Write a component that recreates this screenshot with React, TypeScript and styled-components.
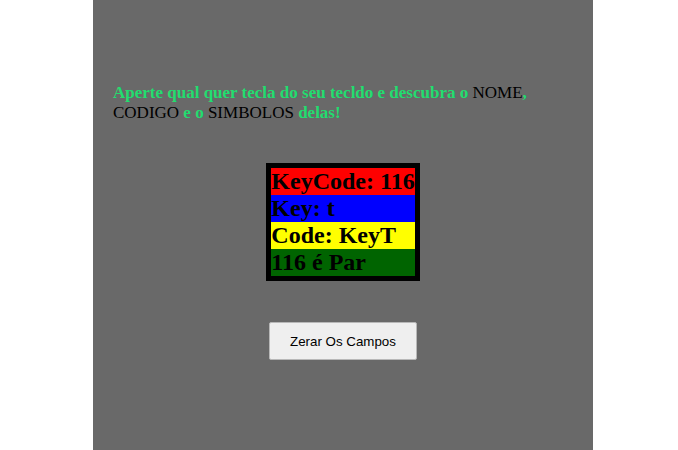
import React from "react";
import styled, { createGlobalStyle } from "styled-components";

const Global = createGlobalStyle`
  html, body { margin: 0; padding: 0; background: #ffffff; }
  #root { min-height: 450px; }
`;

const Page = styled.div`
  display: flex;
  justify-content: center;
  padding-left: 8px;
  min-height: 450px;
`;

const Panel = styled.main`
  width: 500px;
  min-height: 450px;
  box-sizing: border-box;
  background: #696969;
  padding: 83px 20px 20px;
  display: flex;
  flex-direction: column;
  align-items: center;
  font-family: "Liberation Serif", "Times New Roman", serif;
`;

const Intro = styled.p`
  align-self: stretch;
  margin: 0;
  font-size: 17px;
  line-height: 20px;
  color: #000000;
`;

const Hi = styled.span`
  color: #22dd6f;
  font-weight: bold;
`;

const Board = styled.div`
  margin-top: 40px;
  border: 5px solid #000000;
  display: flex;
  flex-direction: column;
`;

const Row = styled.div<{ $bg: string }>`
  background: ${(p) => p.$bg};
  color: #000000;
  font-size: 24px;
  font-weight: bold;
  line-height: 27px;
  white-space: nowrap;
`;

const ResetButton = styled.button`
  margin-top: 41px;
  width: 148px;
  height: 38px;
  background: #efefef;
  border: 1px solid #b8b8b8;
  border-radius: 2px;
  font-family: "Liberation Sans", Arial, sans-serif;
  font-size: 13.33px;
  color: #000000;
  cursor: pointer;
`;

export default function App() {
  return (
    <>
      <Global />
      <Page>
        <Panel>
          <Intro>
            <Hi>Aperte qual quer tecla do seu tecldo e descubra o </Hi>
            NOME<Hi>,</Hi> CODIGO <Hi>e o</Hi> SIMBOLOS <Hi>delas!</Hi>
          </Intro>
          <Board>
            <Row $bg="#ff0000">KeyCode: 116</Row>
            <Row $bg="#0000ff">Key: t</Row>
            <Row $bg="#ffff00">Code: KeyT</Row>
            <Row $bg="#006400">116 é Par</Row>
          </Board>
          <ResetButton type="button">Zerar Os Campos</ResetButton>
        </Panel>
      </Page>
    </>
  );
}
